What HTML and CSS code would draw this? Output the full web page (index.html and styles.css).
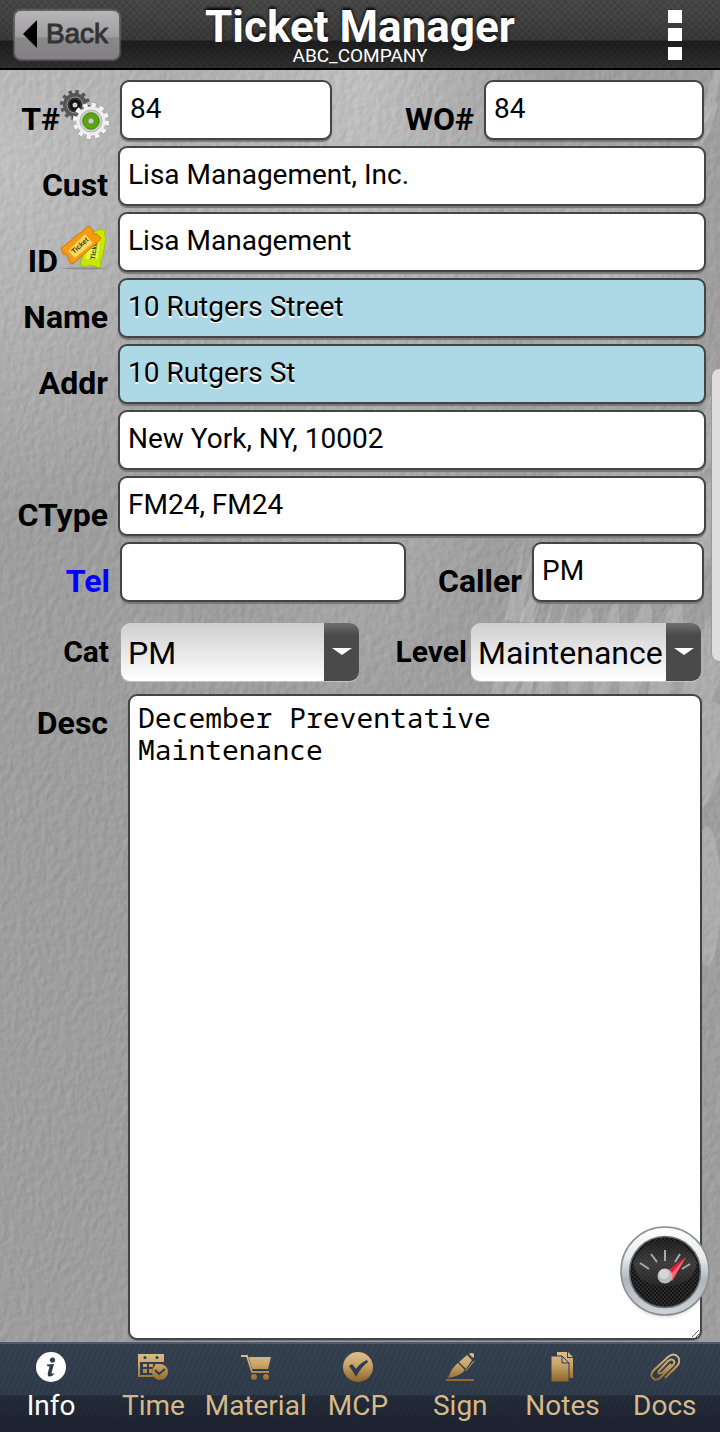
FILE: index.html
```html
<!DOCTYPE html>
<html lang="en">
<head>
	<meta charset="UTF-8">
	<meta name="viewport" content="width=device-width, initial-scale=1">
	<title>Ticket Manager</title>
	<link rel="stylesheet" href="styles.css">
</head>
<body>
	<header class="topbar">
		<button type="button" class="back">
			<svg width="16" height="30" viewBox="0 0 16 30"><path d="M1 15L15 1V29Z"/></svg>
			<span>Back</span>
		</button>
		<div class="heading">
			<h1>Ticket Manager</h1>
			<p>ABC_COMPANY</p>
		</div>
		<button type="button" class="more" aria-label="Menu">
			<svg width="14" height="50" viewBox="0 0 14 50"><path d="M0 0H14V13H0ZM0 18H14V31H0ZM0 37H14V50H0Z"/></svg>
		</button>
	</header>

	<main class="page">
		<svg class="backdrop" width="100%" height="100%" aria-hidden="true">
			<defs>
				<filter id="plaster" x="0" y="0" width="100%" height="100%" color-interpolation-filters="sRGB">
					<feTurbulence type="fractalNoise" baseFrequency="0.16 0.12" numOctaves="2" seed="4"/>
					<feDiffuseLighting lighting-color="#fff" surfaceScale="1" diffuseConstant="1.2">
						<feDistantLight azimuth="215" elevation="30"/>
					</feDiffuseLighting>
				</filter>
			</defs>
			<rect class="plaster" width="100%" height="100%" filter="url(#plaster)"/>
			<svg x="100%" width="1" height="1" overflow="visible" fill="#fff" fill-opacity=".15">
				<!-- feathers -->
				<path d="M-216 550L-196 470L-205 550ZM-211 551L-184 470L-198 551ZM-200 552L-168 470L-188 552Z"/>
				<path d="M-230 625L-190 525L-220 625ZM-216 625L-178 525L-206 625ZM-202 625L-165 525L-190 625ZM-186 625L-150 525L-170 625Z"/>
				<ellipse cx="-140" cy="592" rx="8" ry="55" transform="rotate(10 -140 592)"/>
				<ellipse cx="-114" cy="590" rx="9" ry="58" transform="rotate(10 -114 590)"/>
				<ellipse cx="-85" cy="592" rx="11" ry="62" transform="rotate(12 -85 592)"/>
				<ellipse cx="-55" cy="594" rx="12" ry="66" transform="rotate(12 -55 594)"/>
				<ellipse cx="-15" cy="600" rx="17" ry="72" transform="rotate(18 -15 600)"/>
				<ellipse cx="-13" cy="685" rx="15" ry="54" transform="rotate(9 -13 685)"/>
				<ellipse cx="-13" cy="826" rx="14" ry="70"/>
				<ellipse cx="-14" cy="455" rx="13" ry="55" transform="rotate(12 -14 455)"/>
				<ellipse cx="-10" cy="360" rx="10" ry="44" transform="rotate(12 -10 360)"/>
				<ellipse cx="-7" cy="20" rx="5" ry="34" transform="rotate(15 -7 20)"/>
				<ellipse cx="-16" cy="60" rx="5" ry="30" transform="rotate(25 -16 60)"/>
				<path d="M-160 402L-120 398L-20 400L-20 410L-165 410Z"/>
			</svg>
		</svg>

		<form class="ticket">
			<div class="row row-number">
				<label class="with-icon" for="ticket">T#<svg width="50" height="50" viewBox="0 0 50 50">
					<circle cx="15" cy="15" r="13" fill="none" stroke="#555" stroke-width="4" stroke-dasharray="3.4 3.4"/>
					<circle cx="15" cy="15" r="12" fill="#555"/>
					<circle cx="15" cy="15" r="8" fill="#333" stroke="#999" stroke-width="1"/>
					<circle cx="15" cy="15" r="4" fill="#ccc" stroke="#111" stroke-width="3"/>
					<circle cx="31" cy="31" r="16.5" fill="none" stroke="#888" stroke-width="4" stroke-dasharray="5 3.64"/>
					<circle cx="31" cy="31" r="16" fill="none" stroke="#f4f4f4" stroke-width="4.4" stroke-dasharray="4.4 3.98"/>
					<circle cx="31" cy="31" r="14.5" fill="#eee"/>
					<circle cx="31" cy="31" r="11" fill="#d0d0d0" stroke="#aaa" stroke-width=".8"/>
					<circle cx="31" cy="31" r="8.3" fill="#59a608" stroke="#397500" stroke-width=".8"/>
					<circle cx="31" cy="31" r="3" fill="#ccc" stroke="#777" stroke-width=".7"/>
				</svg></label>
				<input id="ticket" type="text" value="84">
				<label for="order">WO#</label>
				<input id="order" type="text" value="84">
			</div>
			<div class="row row-full">
				<label for="cust">Cust</label>
				<input id="cust" type="text" value="Lisa Management, Inc.">
			</div>
			<div class="row row-full">
				<label class="with-icon low" for="site">ID<svg width="50" height="50" viewBox="-2 0 50 50">
					<path d="M0 46.500Q25 44 49 46.500Q25 48.500 0 46.500" fill="#777" opacity=".6"/>
					<path d="M26 13L31 9Q35 11 39 7L46 8Q43 13 46 16L43 34Q39 38 41 42L40 46L33 44Q29 42 26 45L20 43L22 36Z" fill="#c7e600" stroke="#93b800" stroke-width=".7"/>
					<path d="M29 20L40 16L38 37L25 37Z" fill="#e0f64b"/>
					<text class="stub" transform="translate(35 38) rotate(-82)">Ticket</text>
					<path d="M1 26L4 24L26 6L29 4L33 8Q32 12 37 12L41 16L39 19L14 41L11 42L8 37Q9 32 3 32Z" fill="#f49b12" stroke="#c96d00" stroke-width=".8"/>
					<path d="M8 29L25 12L33 21L15 36Z" fill="#ffd663" stroke="#e9b63b" stroke-width=".6"/>
					<text class="stub" transform="translate(14 32) rotate(-42)">Ticket</text>
				</svg></label>
				<input id="site" type="text" value="Lisa Management">
			</div>
			<div class="row row-full">
				<label for="name">Name</label>
				<input id="name" class="marked" type="text" value="10 Rutgers Street">
			</div>
			<div class="row row-full">
				<label for="addr">Addr</label>
				<input id="addr" class="marked" type="text" value="10 Rutgers St">
			</div>
			<div class="row row-full">
				<span></span>
				<input type="text" aria-label="City" value="New York, NY, 10002">
			</div>
			<div class="row row-full">
				<label for="ctype">CType</label>
				<input id="ctype" type="text" value="FM24, FM24">
			</div>
			<div class="row row-call">
				<label class="tel" for="tel">Tel</label>
				<input id="tel" type="tel">
				<label for="caller">Caller</label>
				<input id="caller" type="text" value="PM">
			</div>
			<div class="row row-select">
				<label for="cat">Cat</label>
				<div class="select">
					<select id="cat"><option>PM</option></select>
					<span class="cap"><svg width="20" height="8" viewBox="0 0 20 8"><path d="M0 0H20L10 7Z"/></svg></span>
				</div>
				<label for="level">Level</label>
				<div class="select">
					<select id="level"><option>Maintenance</option></select>
					<span class="cap"><svg width="20" height="8" viewBox="0 0 20 8"><path d="M0 0H20L10 7Z"/></svg></span>
				</div>
			</div>
			<div class="row row-desc">
				<label for="desc">Desc</label>
				<textarea id="desc">December Preventative Maintenance</textarea>
			</div>
		</form>

		<div class="thumb"></div>
		<button type="button" class="gauge" aria-label="Dashboard">
			<svg width="90" height="96" viewBox="0 0 90 96">
				<defs>
					<linearGradient id="rim" x2="0" y2="1">
						<stop offset="0" stop-color="#fff"/>
						<stop offset=".35" stop-color="#e8eaec"/>
						<stop offset=".6" stop-color="#aeb6be"/>
						<stop offset="1" stop-color="#cfd4d9"/>
					</linearGradient>
					<linearGradient id="dial" x2="0" y2="1">
						<stop offset="0" stop-color="#222"/>
						<stop offset=".5" stop-color="#4a4a4a"/>
						<stop offset="1" stop-color="#2c2c2c"/>
					</linearGradient>
					<radialGradient id="shade">
						<stop offset=".7" stop-color="#000" stop-opacity=".3"/>
						<stop offset="1" stop-color="#000" stop-opacity="0"/>
					</radialGradient>
					<pattern id="mesh" width="4" height="4" patternUnits="userSpaceOnUse">
						<path d="M0 0h2v2h-2zM2 2h2v2h-2z" fill="#2b2b2b"/>
					</pattern>
				</defs>
				<ellipse cx="45" cy="52" rx="44" ry="42" fill="url(#shade)"/>
				<circle cx="45" cy="45" r="44" fill="url(#rim)" stroke="#8b8d8f" stroke-width="1.500"/>
				<circle cx="45" cy="46" r="35.500" fill="#151515" stroke="#6d7378" stroke-width="1.500"/>
				<circle cx="45" cy="46" r="34" fill="url(#mesh)"/>
				<path d="M13 37A34 34 0 0 1 77 37Q73 60 45 60Q17 60 13 37Z" fill="url(#dial)" opacity=".7"/>
				<g stroke="#aaa" stroke-width="2">
					<path d="M20 37L29 43M31 28L37 36M45 24V35M60 28L55 36M70 38L62 43"/>
				</g>
				<path d="M66 31L52 55L44 47Z" fill="#e8192f"/>
				<path d="M66 31L52 55L48 51Z" fill="#ff6672"/>
				<circle cx="45" cy="50" r="7.500" fill="#bbb"/>
				<circle cx="44" cy="48" r="5" fill="#d6d6d6"/>
			</svg>
		</button>
	</main>

	<nav class="tabs">
		<a class="tab active" href="#info">
			<svg viewBox="0 0 30 30"><circle cx="15" cy="15" r="15"/><g class="cut"><circle cx="16.500" cy="8" r="2.600"/><path d="M11 12.500L18 12L15.500 21Q15.500 22.500 18.500 21Q16.500 25 13 24.500Q11 24 12 20.500L13.500 14.500L11 14Z"/></g></svg>
			<span>Info</span>
		</a>
		<a class="tab" href="#time">
			<svg viewBox="0 0 30 30">
				<defs><linearGradient id="gold" gradientUnits="userSpaceOnUse" x1="0" y1="2" x2="0" y2="29"><stop offset="0" stop-color="#d9bc89"/><stop offset=".4" stop-color="#c8a468"/><stop offset="1" stop-color="#8f682b"/></linearGradient></defs>
				<path d="M0 2H26V10H0ZM0 10H2V23H15V25H0ZM5 12H9V15H5ZM11 12H15V15H11ZM17 12H21V14H17ZM5 17H9V21H5ZM11 17H14V21H11Z"/>
				<circle cx="22" cy="20" r="8"/><path class="line-cut" d="M17 18L21 22L27 17"/><g class="cut"><circle cx="7" cy="5.500" r="1.500"/><circle cx="19" cy="5.500" r="1.500"/></g>
			</svg>
			<span>Time</span>
		</a>
		<a class="tab" href="#material">
			<svg viewBox="0 0 30 30"><path class="line" d="M0 4H6L11 20H28"/><path d="M8 5H30L27 17H11Z"/><circle cx="13" cy="25" r="3"/><circle cx="25" cy="25" r="3"/></svg>
			<span>Material</span>
		</a>
		<a class="tab" href="#mcp">
			<svg viewBox="0 0 30 30"><circle cx="15" cy="15" r="15"/><path class="cut" d="M6 14L9 12L13 17Q17 11 24 8L25 10Q18 15 13 25Q10 19 6 14Z"/></svg>
			<span>MCP</span>
		</a>
		<a class="tab" href="#sign">
			<svg viewBox="0 0 30 30"><path d="M1 27H29V29H1ZM3 26Q7 15 13 11L20 18Q16 24 3 26ZM14 10L22 3L27 8L21 17ZM24 2Q27 0 29 2L29 5L28 6Z"/><path class="line thin" d="M29 9L21 19"/></svg>
			<span>Sign</span>
		</a>
		<a class="tab" href="#notes">
			<svg viewBox="0 0 30 30"><path d="M9 0H19V6H25V26H9ZM20 0L25 5H20Z"/><path class="edge" d="M3 4H14L21 11V30H3Z"/><path class="fold" d="M14 4V11H21"/></svg>
			<span>Notes</span>
		</a>
		<a class="tab" href="#docs">
			<svg viewBox="0 0 30 30"><path class="line" d="M8 20L18 9Q22 6 24 9Q25 11 23 13L10 26Q5 30 2 25Q0 22 4 18L18 5Q24 0 28 5Q31 9 27 14L15 26M21 12L13 20Q9 23 8 20"/></svg>
			<span>Docs</span>
		</a>
	</nav>
</body>
</html>
```
FILE: styles.css
```css
*{
	margin: 0;
	padding: 0;
	box-sizing: border-box;
}
body{
	display: flex;
	flex-direction: column;
	min-height: 100vh;
	font-family: Roboto, "Liberation Sans", sans-serif;
	color: #000;
	background: #a0a0a0;
}
button{
	border: 0;
	background: none;
	cursor: pointer;
}

/* header */
.topbar{
	display: grid;
	grid-template-columns: 1fr auto 1fr;
	align-items: start;
	height: 70px;
	padding: 0 14px;
	border-bottom: 2px solid #000;
	background:
		repeating-linear-gradient(45deg, rgba(0,0,0,.08) 0 2px, transparent 2px 5px),
		repeating-linear-gradient(-45deg, rgba(0,0,0,.08) 0 2px, transparent 2px 5px),
		linear-gradient(#4b4b4b 0, #3b3b3b 40px, #1e1e1e 41px, #303030 68px);
}
.back{
	display: flex;
	align-items: center;
	justify-content: center;
	gap: 8px;
	width: 106px;
	height: 50px;
	margin-top: 10px;
	border: 1px solid #656365;
	border-radius: 7px;
	background: linear-gradient(#b8b5b8 0, #a09da0 54%, #8b888b 56%, #838083 100%);
	box-shadow: 0 0 2px #aaa;
	color: #333;
	font: 28px/30px "Liberation Sans", Arial, sans-serif;
	-webkit-text-stroke: 1px #333;
	padding: 0 4px 2px 0;
}
.back svg{
	fill: #000;
}
.heading{
	padding-top: 6px;
	text-align: center;
	color: #fff;
}
.heading h1{
	font-size: 44px;
	line-height: 42px;
	font-weight: 700;
	text-shadow: 0 -2px 3px #000;
}
.heading p{
	font-size: 19px;
	line-height: 16px;
}
.more{
	justify-self: end;
	margin: 10px 24px 0 0;
	height: 50px;
	fill: #fff;
}

/* form */
.page{
	position: relative;
	z-index: 0;
	flex: 1;
	display: flex;
	background:
		radial-gradient(circle at 0 90px, rgba(255,255,255,.4), transparent 360px),
		radial-gradient(ellipse at 360px 0, rgba(255,255,255,.4), transparent 190px),
		radial-gradient(ellipse at 600px 205px, rgba(255,255,255,.3), transparent 100px),
		linear-gradient(#a0a0a0, #9f9f9f);
}
.backdrop{
	position: absolute;
	inset: 0;
	z-index: -1;
}
.plaster{
	opacity: .13;
}
.ticket{
	flex: 1;
	display: flex;
	flex-direction: column;
	gap: 6px;
	padding: 10px 0 2px;
}
.row{
	display: grid;
	padding-right: 16px;
}
.row-number{
	grid-template-columns: 120px 212fr 152fr 220fr;
}
.row-full{
	grid-template-columns: 118px 1fr;
	padding-right: 14px;
}
.row-call{
	grid-template-columns: 120px 286fr 126fr 172fr;
}
.row-select{
	grid-template-columns: 121px 238fr 112fr 230fr;
	padding-right: 19px;
	margin: 15px 0 7px;
}
.row-desc{
	flex: 1;
	grid-template-columns: 128px 1fr;
	padding-right: 18px;
}
label{
	padding: 18px 10px 0 0;
	font-size: 32px;
	line-height: 42px;
	font-weight: 700;
	text-align: right;
	white-space: nowrap;
}
.with-icon{
	display: flex;
	justify-content: flex-end;
}
.with-icon svg{
	align-self: flex-end;
	margin-top: -8px;
}
.low{
	padding-top: 10px;
	align-items: flex-end;
	line-height: 22px;
}
.stub{
	font: bold 7px "Liberation Sans", sans-serif;
	fill: #40380a;
}
.tel{
	color: #00f;
}
.row-select label{
	padding: 0 12px 0 0;
	font-size: 30px;
	line-height: 58px;
}
.row-select .select + label{
	padding-right: 4px;
}
.row-desc label{
	padding: 8px 20px 0 0;
}
input, textarea{
	width: 100%;
	border: 2px solid #444;
	border-radius: 9px;
	background: #fff;
	box-shadow: 0 2px 1px #777;
	color: #000;
	outline: 0;
}
input{
	height: 60px;
	padding: 0 8px 4px;
	font: 28px/32px Roboto, "Liberation Sans", sans-serif;
	text-shadow: 0 2px 0 #fff;
}
.marked{
	background: #add8e6;
}
textarea{
	display: block;
	height: 100%;
	padding: 5px 8px;
	font: 28px/32px "Noto Sans Mono", "Droid Sans Mono", "DejaVu Sans Mono", monospace;
	box-shadow: 0 1px 1px #777;
	resize: both;
}
.select{
	display: grid;
	height: 58px;
	border-radius: 9px;
	overflow: hidden;
	background: linear-gradient(#cfcfcf, #fff);
	box-shadow: 0 1px 1px rgba(255,255,255,.4);
}
.select select{
	grid-area: 1 / 1;
	width: 100%;
	height: 58px;
	padding: 2px 34px 0 7px;
	border: 0;
	background: none;
	appearance: none;
	font: 32px/40px Roboto, "Liberation Sans", sans-serif;
	color: #000;
}
.select .cap{
	grid-area: 1 / 1;
	justify-self: end;
	display: flex;
	align-items: center;
	justify-content: center;
	width: 35px;
	background: linear-gradient(#707070 0, #4a4a4a 12px);
	fill: #fff;
	pointer-events: none;
}

/* things floating over the form */
.thumb{
	position: absolute;
	top: 298px;
	right: -8px;
	width: 17px;
	height: 294px;
	border: 1px solid #999;
	border-radius: 10px;
	background: #ddd;
	clip-path: inset(0 8px 0 0);
}
.gauge{
	position: absolute;
	right: 10px;
	bottom: 20px;
	width: 90px;
	height: 96px;
}

/* bottom tabs */
.tabs{
	display: flex;
	height: 90px;
	padding-right: 4px;
	border-top: 2px solid #4f5a68;
	background:
		repeating-linear-gradient(115deg, rgba(0,0,0,.07) 0 2px, transparent 2px 5px),
		linear-gradient(#364252 0, #303c4b 51px, #232c38 52px, #1d2330 88px);
}
.tab{
	flex: 1 1 0;
	min-width: 0;
	display: flex;
	flex-direction: column;
	align-items: center;
	padding-top: 8px;
	color: #d6b98b;
	font-size: 28px;
	line-height: 36px;
	text-decoration: none;
	white-space: nowrap;
}
.tab svg{
	width: 30px;
	height: 30px;
	margin-bottom: 6px;
	fill: url(#gold);
}
.tab .cut{
	fill: #303c4b;
}
.tab .line-cut{
	fill: none;
	stroke: #303c4b;
	stroke-width: 2;
}
.tab .line{
	fill: none;
	stroke: url(#gold);
	stroke-width: 2;
}
.tab .thin{
	stroke-width: 1;
}
.tab .fold{
	fill: none;
	stroke: #303c4b;
	stroke-width: 1;
}
.tab .edge{
	stroke: #303c4b;
	stroke-width: 1;
}
.active{
	color: #fff;
}
.tab.active svg{
	fill: #fff;
}
```
